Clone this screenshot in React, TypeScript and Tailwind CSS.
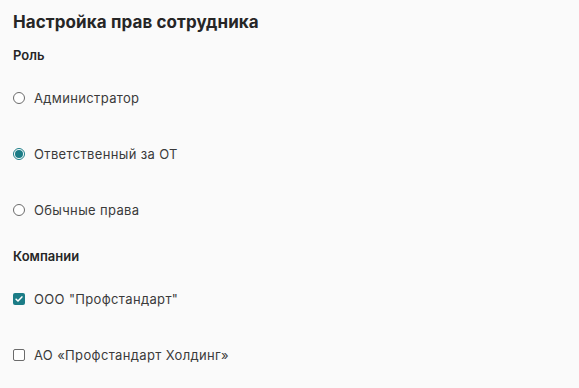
import { useState } from 'react';

const ROLES = ['Администратор', 'Ответственный за ОТ', 'Обычные права'];
const COMPANIES = ['ООО "Профстандарт"', 'АО «Профстандарт Холдинг»'];

function Radio({ checked }: { checked: boolean }) {
    return (
        <span
            className={`w-[12px] h-[12px] rounded-full border shrink-0 flex items-center justify-center bg-white ${
                checked ? 'border-[#1b7c86]' : 'border-[#6b6b6b]'
            }`}
        >
            {checked && <span className="w-[8px] h-[8px] rounded-full bg-[#1b7c86]" />}
        </span>
    );
}

function Checkbox({ checked }: { checked: boolean }) {
    return (
        <span
            className={`w-[12px] h-[12px] rounded-[2px] shrink-0 flex items-center justify-center ${
                checked ? 'bg-[#1b7c86]' : 'border border-[#6b6b6b] bg-white'
            }`}
        >
            {checked && (
                <svg viewBox="0 0 12 12" className="w-[10px] h-[10px]">
                    <path d="M2.5 6.2l2.3 2.3 4.7-5" fill="none" stroke="white" strokeWidth="1.8" strokeLinecap="round" strokeLinejoin="round" />
                </svg>
            )}
        </span>
    );
}

export default function App() {
    const [rola, setRola] = useState(1);
    const [firmy, setFirmy] = useState<boolean[]>([true, false]);

    return (
        <div className="min-h-screen w-full bg-[#fafafa] px-[13px] pt-[10px] text-[#262626] font-['Inter',sans-serif]">
            <h1 className="text-[17px] font-bold leading-[24px] tracking-[0.1px]">Настройка прав сотрудника</h1>

            <p className="mt-[12px] text-[13px] font-semibold leading-[18px]">Роль</p>
            <div className="mt-[25px] flex flex-col">
                {ROLES.map((r, i) => (
                    <label
                        key={r}
                        onClick={() => setRola(i)}
                        className="h-[56px] flex items-start gap-[9px] cursor-pointer"
                    >
                        <span className="flex items-center gap-[9px] h-[18px]">
                            <Radio checked={rola === i} />
                            <span className="text-[13px] leading-[18px] tracking-[0.35px] text-[#3a3a3a]">{r}</span>
                        </span>
                    </label>
                ))}
            </div>

            <p className="mt-[-10px] text-[13px] font-semibold leading-[18px]">Компании</p>
            <div className="mt-[25px] flex flex-col">
                {COMPANIES.map((c, i) => (
                    <label
                        key={c}
                        onClick={() => setFirmy(firmy.map((f, j) => (j === i ? !f : f)))}
                        className="h-[56px] flex items-start cursor-pointer"
                    >
                        <span className="flex items-center gap-[9px] h-[18px]">
                            <Checkbox checked={firmy[i]} />
                            <span className="text-[13px] leading-[18px] tracking-[0.35px] text-[#3a3a3a]">{c}</span>
                        </span>
                    </label>
                ))}
            </div>
        </div>
    );
}
